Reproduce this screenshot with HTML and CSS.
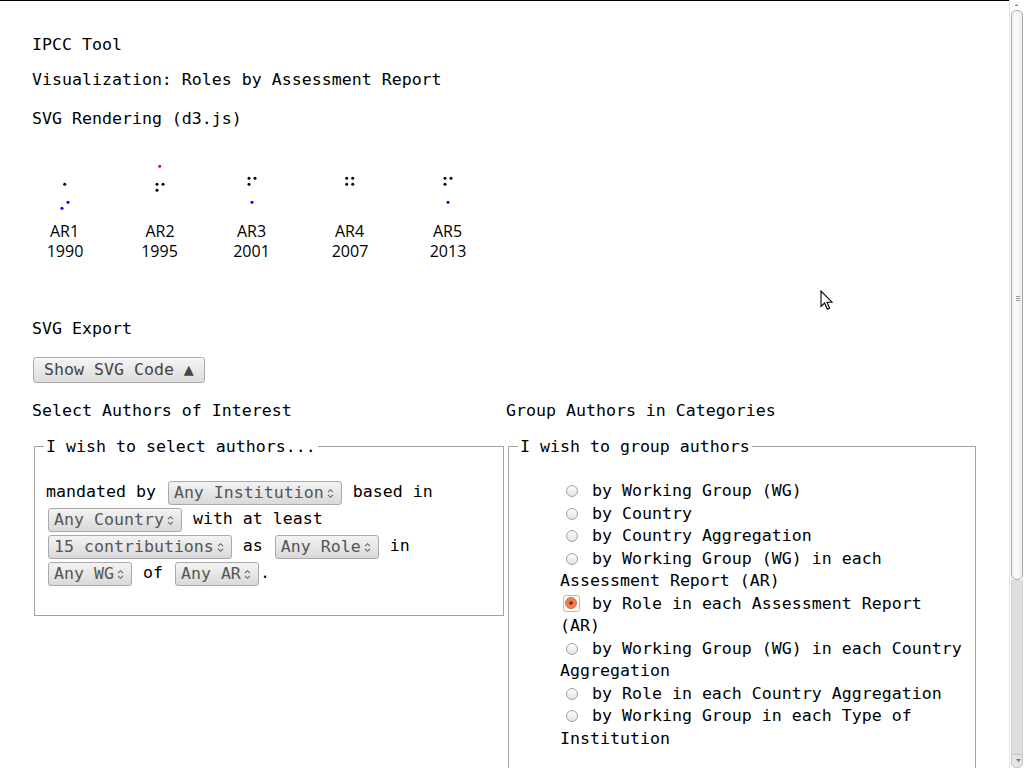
FILE: index.html
```html
<!DOCTYPE html>
<html>
<head>
<meta charset="utf-8">
<title>IPCC Tool</title>
<link rel="stylesheet" href="styles.css">
</head>
<body>
<div class="topline"></div>
<main class="page">
  <div class="line">IPCC Tool</div>
  <div class="line l2">Visualization: Roles by Assessment Report</div>
  <div class="line l3">SVG Rendering (d3.js)</div>
  <svg class="chart" width="480" height="190" viewBox="0 0 480 190">
    <g class="dots">
      <circle cx="32.7" cy="55.3" r="1.5" fill="#000"/>
      <circle cx="36" cy="73.3" r="1.5" fill="#00f"/>
      <circle cx="30" cy="79.3" r="1.5" fill="#00f"/>
      <circle cx="127.7" cy="37.3" r="1.5" fill="#f00"/>
      <circle cx="125" cy="55.3" r="1.5" fill="#000"/>
      <circle cx="131" cy="55.3" r="1.5" fill="#000"/>
      <circle cx="125" cy="61.3" r="1.5" fill="#000"/>
      <circle cx="217" cy="49.3" r="1.5" fill="#000"/>
      <circle cx="223" cy="49.3" r="1.5" fill="#000"/>
      <circle cx="217" cy="55.3" r="1.5" fill="#000"/>
      <circle cx="220" cy="73.3" r="1.5" fill="#00f"/>
      <circle cx="314.7" cy="49.3" r="1.5" fill="#000"/>
      <circle cx="320.7" cy="49.3" r="1.5" fill="#000"/>
      <circle cx="314.7" cy="55.3" r="1.5" fill="#000"/>
      <circle cx="320.7" cy="55.3" r="1.5" fill="#000"/>
      <circle cx="413" cy="49.3" r="1.5" fill="#000"/>
      <circle cx="419" cy="49.3" r="1.5" fill="#000"/>
      <circle cx="413" cy="55.3" r="1.5" fill="#000"/>
      <circle cx="416" cy="73.3" r="1.5" fill="#00f"/>
    </g>
    <g class="labels" text-anchor="middle">
      <text x="32.5" y="107.5">AR1</text><text x="33" y="127.5">1990</text>
      <text x="128" y="107.5">AR2</text><text x="127.5" y="127.5">1995</text>
      <text x="219.5" y="107.5">AR3</text><text x="219.5" y="127.5">2001</text>
      <text x="317.5" y="107.5">AR4</text><text x="318" y="127.5">2007</text>
      <text x="415.5" y="107.5">AR5</text><text x="416" y="127.5">2013</text>
    </g>
  </svg>
  <div class="line">SVG Export</div>
  <button class="btn" type="button">Show SVG Code ▲</button>
  <div class="cols">
    <section class="col">
      <div class="line">Select Authors of Interest</div>
      <fieldset class="box">
        <legend>I wish to select authors...</legend>
        <p class="sentence">mandated by <span class="sel">Any Institution<svg class="arr" width="7" height="11" viewBox="0 0 7 11"><path d="M1 4.2L3.5 1.7L6 4.2M1 6.8L3.5 9.3L6 6.8"/></svg></span> based in <span class="sel">Any Country<svg class="arr" width="7" height="11" viewBox="0 0 7 11"><path d="M1 4.2L3.5 1.7L6 4.2M1 6.8L3.5 9.3L6 6.8"/></svg></span> with at least <span class="sel">15 contributions<svg class="arr" width="7" height="11" viewBox="0 0 7 11"><path d="M1 4.2L3.5 1.7L6 4.2M1 6.8L3.5 9.3L6 6.8"/></svg></span> as <span class="sel">Any Role<svg class="arr" width="7" height="11" viewBox="0 0 7 11"><path d="M1 4.2L3.5 1.7L6 4.2M1 6.8L3.5 9.3L6 6.8"/></svg></span> in <span class="sel">Any WG<svg class="arr" width="7" height="11" viewBox="0 0 7 11"><path d="M1 4.2L3.5 1.7L6 4.2M1 6.8L3.5 9.3L6 6.8"/></svg></span> of <span class="sel">Any AR<svg class="arr" width="7" height="11" viewBox="0 0 7 11"><path d="M1 4.2L3.5 1.7L6 4.2M1 6.8L3.5 9.3L6 6.8"/></svg></span>.</p>
      </fieldset>
    </section>
    <section class="col">
      <div class="line">Group Authors in Categories</div>
      <fieldset class="box">
        <legend>I wish to group authors</legend>
        <ul class="options">
          <li><span class="radio"></span> by Working Group (WG)</li>
          <li><span class="radio"></span> by Country</li>
          <li><span class="radio"></span> by Country Aggregation</li>
          <li><span class="radio"></span> by Working Group (WG) in each Assessment Report (AR)</li>
          <li><span class="focus"><span class="radio checked"></span></span> by Role in each Assessment Report (AR)</li>
          <li><span class="radio"></span> by Working Group (WG) in each Country Aggregation</li>
          <li><span class="radio"></span> by Role in each Country Aggregation</li>
          <li><span class="radio"></span> by Working Group in each Type of Institution</li>
        </ul>
      </fieldset>
    </section>
  </div>
</main>
<svg class="cursor" width="14" height="22" viewBox="0 0 14 22"><path d="M1 1L1 16.5L4.6 13L7.3 19.2L9.6 18.2L7 12.2L12 12.2Z" fill="#fff" stroke="#000" stroke-width="1.1" stroke-linejoin="miter"/></svg>
<div class="scrollbar">
  <div class="sb-up"><svg width="15" height="10" viewBox="0 0 15 10"><path d="M5.5 6L7.5 4L9.5 6Z" fill="#888"/></svg></div>
  <div class="sb-thumb"><span class="grip"></span></div>
  <div class="sb-track"></div>
  <div class="sb-down"><svg width="15" height="12" viewBox="0 0 15 12"><path d="M5 4L10 4L7.5 7Z" fill="#777"/></svg></div>
</div>
</body>
</html>
```

FILE: styles.css
```css
html {
  overflow: hidden;
  background: #fff;
}
body {
  margin: 0;
  font-family: "DejaVu Sans Mono", "Liberation Mono", monospace;
  font-size: 16.6px;
  color: #000;
  background: #fff;
}
.topline {
  height: 1px;
  background: #000;
}
.page {
  padding: 34px 0 0 32px;
  width: 977px;
  box-sizing: border-box;
}
.line {
  height: 20px;
  line-height: 20px;
  white-space: nowrap;
}
.l2 { margin-top: 15px; }
.l3 { margin-top: 19px; }
.chart {
  display: block;
}
.labels text {
  font-family: "Open Sans", "DejaVu Sans", sans-serif;
  font-size: 16px;
  fill: #000;
}
.btn {
  display: block;
  margin: 18px 0 0 1px;
  height: 26px;
  padding: 0 10px;
  border: 1px solid #a9a9a9;
  border-radius: 3px;
  background: linear-gradient(#f5f5f5, #dcdcdc);
  color: #444;
  font-family: inherit;
  font-size: 16.6px;
  line-height: 24px;
  box-shadow: inset 0 1px 0 #fff;
}
.cols {
  display: grid;
  grid-template-columns: 474px 472px;
  margin-top: 18px;
}
.box {
  margin: 14px 2px 0;
  padding: 0 11px 29px;
  border: 1px solid #a3a3a3;
  min-width: 0;
}
.box legend {
  padding: 2px 2px 0;
  margin-left: -2px;
  line-height: 20px;
}
.sentence {
  margin: 21px 0 0;
  line-height: 27px;
}
.sel {
  display: inline-block;
  box-sizing: border-box;
  height: 24px;
  line-height: 22px;
  padding: 0 7px 0 5px;
  margin: 0 1px 0 2px;
  border: 1px solid #a9a9a9;
  border-radius: 3px;
  background: linear-gradient(#f3f3f3, #d9d9d9);
  color: #555;
  vertical-align: middle;
  white-space: nowrap;
}
.arr {
  margin-left: 3px;
  vertical-align: -1px;
}
.arr path {
  fill: none;
  stroke: #666;
  stroke-width: 1.1;
}
.options {
  list-style: none;
  margin: 23px 0 0;
  padding: 0 0 0 40px;
  line-height: 22.55px;
}
.radio {
  display: inline-block;
  box-sizing: border-box;
  width: 12px;
  height: 12px;
  margin: 0 4px 0 6px;
  border: 1px solid #a2a2a2;
  border-radius: 50%;
  background: linear-gradient(#fdfdfd, #e4e4e4);
  vertical-align: -1px;
}
.focus {
  display: inline-block;
  box-sizing: border-box;
  width: 17px;
  height: 17px;
  margin: 0 2px 0 3px;
  padding: 1px;
  border: 1px solid #f2a98a;
  border-radius: 3px;
  vertical-align: -3px;
}
.radio.checked {
  display: block;
  margin: 0;
  border-color: #d8602f;
  background: radial-gradient(circle, #7a2c10 0, #7a2c10 1.3px, #f07b4b 2.2px, #f08558 100%);
}
.cursor {
  position: absolute;
  left: 820px;
  top: 290px;
}
.scrollbar {
  position: fixed;
  top: 0;
  right: 0;
  width: 15px;
  height: 768px;
  display: flex;
  flex-direction: column;
  background: #fff;
  border-left: 1px solid #e2e2e2;
  box-sizing: border-box;
}
.sb-up {
  height: 10px;
  flex: none;
}
.sb-up svg, .sb-down svg { display: block; margin-left: -1px; }
.sb-thumb {
  flex: none;
  height: 568px;
  margin: 0 1px 0 1px;
  border: 1px solid #a8a8a8;
  border-radius: 5px;
  background: linear-gradient(90deg, #f0f0f0, #fbfbfb 50%, #ececec);
  position: relative;
}
.grip {
  position: absolute;
  left: 4px;
  top: 285px;
  width: 4px;
  height: 5px;
  border-top: 1px solid #999;
  border-bottom: 1px solid #999;
  box-sizing: border-box;
}
.grip::after {
  content: "";
  position: absolute;
  left: 0;
  right: 0;
  top: 1px;
  height: 1px;
  background: #999;
}
.sb-track {
  flex: 1;
  margin: 0 1px;
  background: #dedede;
  border-left: 1px solid #cfcfcf;
  border-right: 1px solid #cfcfcf;
}
.sb-down {
  height: 12px;
  flex: none;
  margin: 0 1px;
  background: #e4e4e4;
  border: 1px solid #c4c4c4;
  border-radius: 0 0 5px 5px;
}
```
